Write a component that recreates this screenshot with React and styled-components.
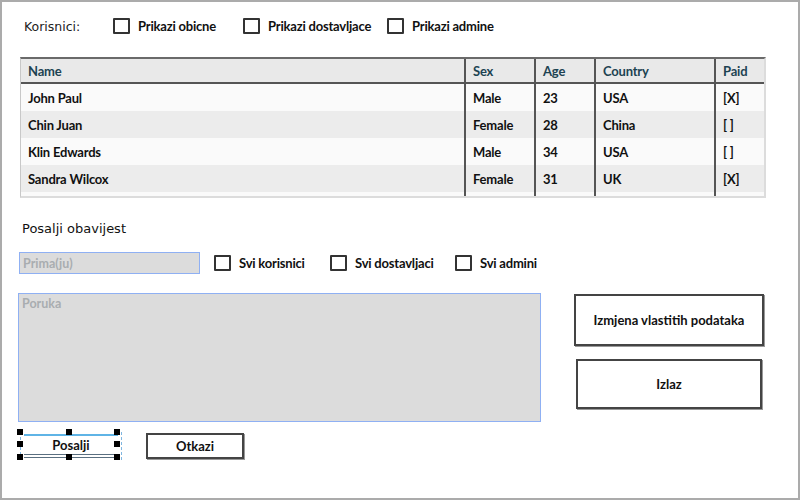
import React from 'react';
import styled, { createGlobalStyle } from 'styled-components';

const GlobalStyle = createGlobalStyle`
  html, body {
    margin: 0;
    padding: 0;
    background: #fff;
  }
`;

const narrow = `Lato, "Liberation Sans", sans-serif`;
const sketch = `"DejaVu Sans", "Noto Sans", sans-serif`;

const Frame = styled.div`
  box-sizing: border-box;
  width: 800px;
  height: 500px;
  border: 2px solid #ababab;
  padding: 14px 0 0 18px;
  font-family: ${narrow};
  color: #111;
`;

const TopRow = styled.div`
  display: flex;
  align-items: center;
  height: 20px;
`;

const SketchLabel = styled.div`
  font-family: ${sketch};
  font-size: 12.5px;
  color: #222;
  width: ${(p) => p.$w || 'auto'};
  margin-left: ${(p) => p.$ml || 0}px;
`;

const CheckItem = styled.label`
  display: flex;
  align-items: center;
  gap: 8px;
  width: ${(p) => (p.$w ? `${p.$w}px` : 'auto')};
  font-size: 13px;
  font-weight: bold;
  letter-spacing: -0.2px;
  white-space: nowrap;
`;

const Box = styled.span`
  box-sizing: border-box;
  width: 17px;
  height: 16px;
  border: 2px solid #333;
  border-radius: 1px;
  background: #fff;
`;

const Table = styled.div`
  width: 743px;
  margin-top: 21px;
  border-top: 2px solid #6a6a6a;
  border-left: 1px solid #c8c8c8;
  border-right: 2px solid #dcdcdc;
  border-bottom: 2px solid #dcdcdc;
`;

const Row = styled.div`
  display: grid;
  grid-template-columns: 443px 70px 60px 120px 1fr;
  height: ${(p) => p.$h || 27}px;
  background: ${(p) => p.$bg};
  border-bottom: ${(p) => (p.$head ? '2px solid #555' : 'none')};
`;

const Cell = styled.div`
  display: flex;
  align-items: center;
  padding-left: 7px;
  font-size: 13px;
  font-weight: bold;
  letter-spacing: -0.2px;
  color: ${(p) => (p.$head ? '#1d4352' : '#111')};
  border-left: ${(p) => (p.$first ? 'none' : '2px solid #555')};
`;

const Title = styled.div`
  font-family: ${sketch};
  font-size: 13px;
  color: #111;
  margin-top: 22px;
  margin-left: 2px;
  height: 18px;
  line-height: 18px;
`;

const RecipientRow = styled.div`
  display: flex;
  align-items: center;
  margin-top: 14px;
  margin-left: -1px;
`;

const Field = styled.div`
  box-sizing: border-box;
  background: #dcdcdc;
  border: 1px solid #8fb0f3;
  color: #a9adb0;
  font-size: 12.5px;
  font-weight: bold;
  padding: 2px 3px;
  width: ${(p) => p.$w}px;
  height: ${(p) => p.$h}px;
  display: flex;
  align-items: ${(p) => (p.$top ? 'flex-start' : 'center')};
`;

const Checks = styled.div`
  display: flex;
  align-items: center;
  margin-left: 14px;
`;

const MainRow = styled.div`
  display: flex;
  margin-top: 19px;
  margin-left: -2px;
`;

const LeftCol = styled.div`
  display: flex;
  flex-direction: column;
`;

const ButtonRow = styled.div`
  display: flex;
  align-items: center;
  gap: 24px;
  margin-top: 10px;
  margin-left: 2px;
`;

const Selection = styled.div`
  position: relative;
  box-sizing: border-box;
  width: 102px;
  height: 28px;
  border-left: 1px dashed #7fb6e0;
  border-right: 1px dashed #7fb6e0;
  padding: 2px 3px 0;
`;

const Handle = styled.span`
  position: absolute;
  width: 6px;
  height: 6px;
  background: #000;
  left: ${(p) => p.$x}px;
  top: ${(p) => p.$y}px;
`;

const SelButton = styled.div`
  box-sizing: border-box;
  height: 24px;
  border-top: 2px solid #5fb4e6;
  border-bottom: 4px double #5a6f80;
  display: flex;
  align-items: center;
  justify-content: center;
  font-size: 13px;
  font-weight: bold;
`;

const Button = styled.div`
  box-sizing: border-box;
  width: ${(p) => p.$w}px;
  height: ${(p) => p.$h}px;
  margin-left: ${(p) => p.$ml || 0}px;
  border: 2px solid #444;
  box-shadow: 1px 1px 0 #999;
  background: #fff;
  display: flex;
  align-items: center;
  justify-content: center;
  font-size: 13px;
  font-weight: bold;
`;

const RightCol = styled.div`
  display: flex;
  flex-direction: column;
  gap: 13px;
  margin-left: 33px;
  padding-top: 1px;
`;

const rows = [
  ['John Paul', 'Male', '23', 'USA', '[X]'],
  ['Chin Juan', 'Female', '28', 'China', '[ ]'],
  ['Klin Edwards', 'Male', '34', 'USA', '[ ]'],
  ['Sandra Wilcox', 'Female', '31', 'UK', '[X]'],
];

const handles = [
  [-4, -3], [45, -3], [93, -3],
  [-4, 9], [93, 9],
  [-4, 22], [45, 22], [93, 22],
];

const App = () => {
  return (
    <Frame>
      <GlobalStyle />
      <TopRow>
        <SketchLabel $w="89px" $ml={4}>Korisnici:</SketchLabel>
        <CheckItem $w={130}><Box />Prikazi obicne</CheckItem>
        <CheckItem $w={144}><Box />Prikazi dostavljace</CheckItem>
        <CheckItem><Box />Prikazi admine</CheckItem>
      </TopRow>

      <Table>
        <Row $head $h={23} $bg="#e9e9e9">
          <Cell $head $first>Name</Cell>
          <Cell $head>Sex</Cell>
          <Cell $head>Age</Cell>
          <Cell $head>Country</Cell>
          <Cell $head>Paid</Cell>
        </Row>
        {rows.map((r, i) => (
          <Row key={r[0]} $bg={i % 2 ? '#ececec' : '#fafafa'}>
            {r.map((v, j) => (
              <Cell key={j} $first={j === 0}>{v}</Cell>
            ))}
          </Row>
        ))}
        <Row $h={4} $bg="#fafafa">
          <Cell $first />
          <Cell />
          <Cell />
          <Cell />
          <Cell />
        </Row>
      </Table>

      <Title>Posalji obavijest</Title>

      <RecipientRow>
        <Field $w={181} $h={22}>Prima(ju)</Field>
        <Checks>
          <CheckItem $w={116}><Box />Svi korisnici</CheckItem>
          <CheckItem $w={125}><Box />Svi dostavljaci</CheckItem>
          <CheckItem><Box />Svi admini</CheckItem>
        </Checks>
      </RecipientRow>

      <MainRow>
        <LeftCol>
          <Field $w={523} $h={129} $top>Poruka</Field>
          <ButtonRow>
            <Selection>
              <SelButton>Posalji</SelButton>
              {handles.map(([x, y], i) => (
                <Handle key={i} $x={x} $y={y} />
              ))}
            </Selection>
            <Button $w={98} $h={26}>Otkazi</Button>
          </ButtonRow>
        </LeftCol>
        <RightCol>
          <Button $w={190} $h={52}>Izmjena vlastitih podataka</Button>
          <Button $w={186} $h={50} $ml={2}>Izlaz</Button>
        </RightCol>
      </MainRow>
    </Frame>
  );
};

export default App;
